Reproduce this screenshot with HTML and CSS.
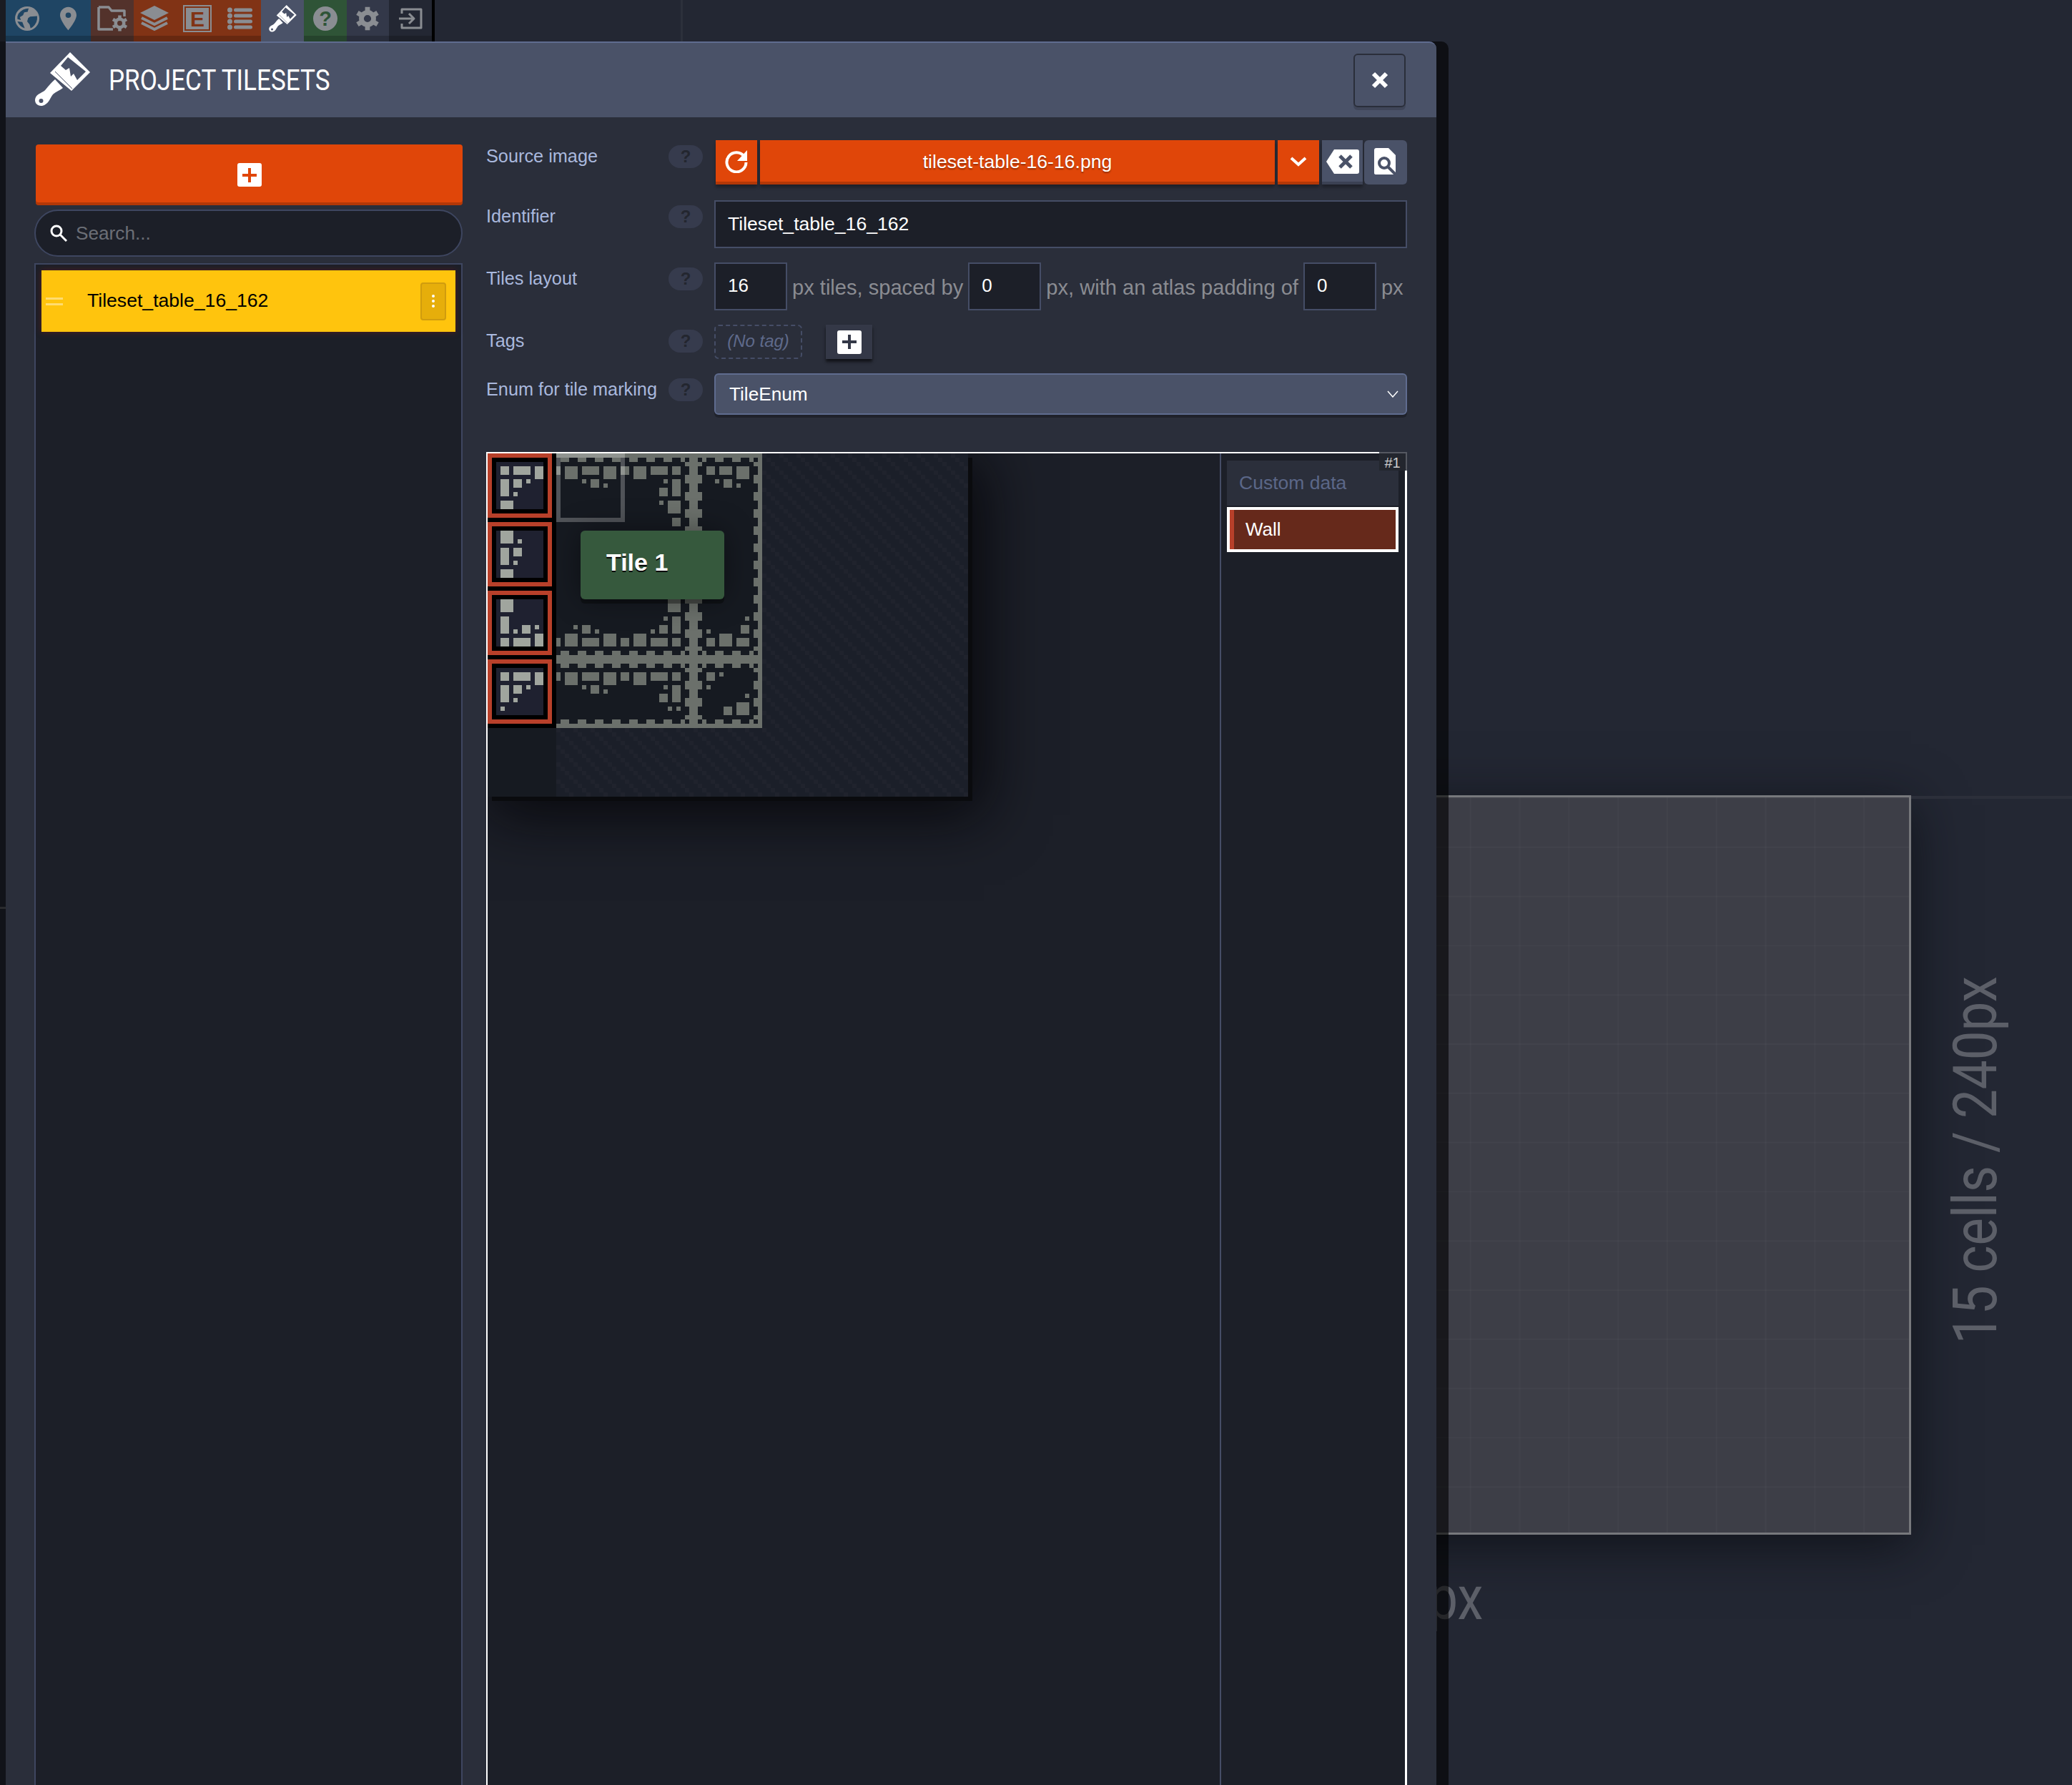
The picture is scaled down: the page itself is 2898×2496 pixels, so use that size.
FILE: index.html
```html
<!DOCTYPE html>
<html>
<head>
    <title>Project tilesets</title>
    <link rel="stylesheet" href="styles.css">
</head>
<body>
    <svg class="defs" width="0" height="0">
        <symbol id="brush" viewBox="9 8 77 78">
            <path fill="currentColor" fill-rule="evenodd" d="M30 37L58 8l28 28-26 26zM55 15L45 27l7 6 5-3 2 12 4-4 5 9 12-12z"/>
            <path fill="currentColor" fill-rule="evenodd" d="M37 46l11 12c-5 4-10 5-14 9-4 5-6 14-15 16-8 1-12-6-9-12 3-6 10-6 14-11 4-5 8-10 13-14zM17.500 73a3 3 0 100 6 3 3 0 000-6z"/>
            <path stroke="#4a5268" stroke-width="1" d="M37 35l24 24"/>
        </symbol>
        <symbol id="gear" viewBox="-20 -20 40 40">
            <g fill="none" stroke="currentColor" stroke-width="8">
                <circle r="10"/>
                <path d="M0-19v7M0 12v7M-16.500-9.500l6 3.500M10.500 6l6 3.500M-16.500 9.500l6-3.500M10.500-6l6-3.500"/>
            </g>
        </symbol>
    </svg>

    <div class="world">
        <div class="world-line"></div>
        <div class="world-tick"></div>
        <div class="level"></div>
        <div class="level-line"></div>
        <div class="level-width">15 cells / 240px</div>
        <div class="level-height">15 cells / 240px</div>
    </div>

    <div class="topbar">
        <div class="tool tool-wide tool-blue">
            <svg class="icon" width="34" height="34" viewBox="0 0 100 100">
                <circle cx="50" cy="50" r="50" fill="#8a8d92"/>
                <path fill="#1f4564" d="M14 30Q32 8 56 8L52 22 38 24 33 36 20 44 24 56 10 52Q8 40 14 30zM62 42L91 40Q94 68 72 85L64 90 60 74 50 62 54 48zM10 62L30 64 40 90Q20 84 10 62z"/>
            </svg>
            <svg class="icon" width="23" height="34" viewBox="0 0 24 34">
                <path fill="#8a8d92" fill-rule="evenodd" d="M12 0C5.400 0 0 5.400 0 12c0 8 12 22 12 22s12-14 12-22C24 5.400 18.600 0 12 0zm0 16a4 4 0 110-8 4 4 0 010 8z"/>
            </svg>
        </div>
        <div class="tool tool-brown">
            <svg class="icon" width="42" height="36" viewBox="0 0 42 36">
                <path fill="none" stroke="#8a8d92" stroke-width="3.500" stroke-linejoin="round" d="M2 2H16L20 7H38V15M22 33H2V2"/>
                <use href="#gear" x="20" y="13" width="23" height="23" color="#8a8d92"/>
            </svg>
        </div>
        <div class="tool tool-rust">
            <svg class="icon" width="40" height="36" viewBox="0 0 40 36">
                <path fill="#8a8d92" d="M20 0L40 10 20 20 0 10z"/>
                <path fill="none" stroke="#8a8d92" stroke-width="4" stroke-linejoin="round" d="M2 17L20 26 38 17M2 24L20 33 38 24"/>
            </svg>
        </div>
        <div class="tool tool-rust">
            <svg class="icon" width="40" height="38" viewBox="0 0 40 38">
                <rect x="1" y="1" width="38" height="36" fill="none" stroke="#8a8d92" stroke-width="2"/>
                <rect x="4" y="4" width="32" height="30" fill="#8a8d92"/>
                <text x="20" y="30" text-anchor="middle" class="icon-letter" fill="#813315">E</text>
            </svg>
        </div>
        <div class="tool tool-rust">
            <svg class="icon" width="36" height="32" viewBox="0 0 36 32">
                <g fill="#8a8d92">
                    <circle cx="3.500" cy="4" r="3.500"/><circle cx="3.500" cy="12" r="3.500"/>
                    <circle cx="3.500" cy="20" r="3.500"/><circle cx="3.500" cy="28" r="3.500"/>
                    <rect x="9" y="1.500" width="26" height="5" rx="2.500"/><rect x="9" y="9.500" width="26" height="5" rx="2.500"/>
                    <rect x="9" y="17.500" width="26" height="5" rx="2.500"/><rect x="9" y="25.500" width="26" height="5" rx="2.500"/>
                </g>
            </svg>
        </div>
        <div class="tool tool-active">
            <svg class="icon icon-brush-small"><use href="#brush"/></svg>
        </div>
        <div class="tool tool-green">
            <svg class="icon" width="34" height="34" viewBox="0 0 34 34">
                <circle cx="17" cy="17" r="17" fill="#8a8d92"/>
                <text x="17" y="27" text-anchor="middle" class="icon-help" fill="#2f5437">?</text>
            </svg>
        </div>
        <div class="tool tool-slate">
            <svg class="icon" width="34" height="34" color="#8a8d92"><use href="#gear"/></svg>
        </div>
        <div class="tool tool-dark">
            <svg class="icon" width="34" height="30" viewBox="0 0 34 30">
                <path fill="none" stroke="#8a8d92" stroke-width="3" stroke-linejoin="round" d="M5 8V2H32V28H5V22M1 15H22M15 8L22 15 15 22"/>
            </svg>
        </div>
    </div>

    <div class="modal">
        <div class="modal-head">
            <svg class="modal-icon"><use href="#brush"/></svg>
            <h1 class="modal-title">PROJECT TILESETS</h1>
            <div class="modal-close">
                <svg width="24" height="24" viewBox="0 0 24 24"><path stroke="#fff" stroke-width="6" d="M3 3L21 21M21 3L3 21"/></svg>
            </div>
        </div>
        <div class="modal-body">
            <div class="side">
                <div class="add-btn"><span class="plus-box plus-rust"></span></div>
                <div class="search">
                    <svg width="24" height="24" viewBox="0 0 24 24"><circle cx="9" cy="9" r="7" fill="none" stroke="#fff" stroke-width="3"/><path stroke="#fff" stroke-width="3" d="M14 14L23 23"/></svg>
                    <span>Search...</span>
                </div>
                <div class="list">
                    <div class="list-item">
                        <span class="grip"></span>
                        <span class="list-name">Tileset_table_16_162</span>
                        <span class="list-menu"><i></i><i></i><i></i></span>
                    </div>
                </div>
            </div>

            <div class="main">
                <div class="row row-source">
                    <label>Source image</label><span class="help">?</span>
                    <div class="field">
                        <div class="btn btn-orange btn-reload">
                            <svg width="32" height="32" viewBox="0 0 32 32"><path fill="none" stroke="#fff" stroke-width="4" d="M27 9A13.500 13.500 0 1 0 29.500 17"/><path fill="#fff" d="M31 0V15H17z"/></svg>
                        </div>
                        <div class="btn btn-orange btn-file">tileset-table-16-16.png</div>
                        <div class="btn btn-orange btn-drop">
                            <svg width="24" height="14" viewBox="0 0 24 14"><path fill="none" stroke="#fff" stroke-width="4" d="M2 2L12 11 22 2"/></svg>
                        </div>
                        <div class="btn btn-slate btn-remove">
                            <svg width="46" height="34" viewBox="0 0 46 34"><path fill="#fff" d="M11 0H43Q46 0 46 3V31Q46 34 43 34H11L0 17z"/><path stroke="#4a5268" stroke-width="5" d="M19 9L35 25M35 9L19 25"/></svg>
                        </div>
                        <div class="btn btn-slate btn-locate">
                            <svg width="32" height="38" viewBox="0 0 32 38"><path fill="#fff" d="M3 0H20L30 10V35Q30 37 27 37H3Q0 37 0 35V3Q0 0 3 0z"/><circle cx="14" cy="21" r="7" fill="none" stroke="#4a5268" stroke-width="4"/><path stroke="#4a5268" stroke-width="4" d="M19 26L30 37"/></svg>
                        </div>
                    </div>
                </div>
                <div class="row">
                    <label>Identifier</label><span class="help">?</span>
                    <div class="field"><div class="input input-full">Tileset_table_16_162</div></div>
                </div>
                <div class="row">
                    <label>Tiles layout</label><span class="help">?</span>
                    <div class="field field-layout">
                        <div class="input input-num">16</div>
                        <span>px tiles, spaced by</span>
                        <div class="input input-num">0</div>
                        <span>px, with an atlas padding of</span>
                        <div class="input input-num">0</div>
                        <span>px</span>
                    </div>
                </div>
                <div class="row row-tags">
                    <label>Tags</label><span class="help">?</span>
                    <div class="field field-tags">
                        <div class="no-tag">(No tag)</div>
                        <div class="add-tag"><span class="plus-box plus-dark"></span></div>
                    </div>
                </div>
                <div class="row row-enum">
                    <label>Enum for tile marking</label><span class="help">?</span>
                    <div class="field">
                        <div class="select">
                            <span>TileEnum</span>
                            <svg width="16" height="10" viewBox="0 0 16 10"><path fill="none" stroke="#fff" stroke-width="1.500" d="M1 1L8 9 15 1"/></svg>
                        </div>
                    </div>
                </div>

                <div class="tile-panel">
                    <div class="tile-canvas">
                        <div class="atlas">
                            <svg class="atlas-art" width="672" height="480" viewBox="0 0 112 80" shape-rendering="crispEdges">
                                <defs>
                                    <pattern id="check" width="4" height="4" patternUnits="userSpaceOnUse">
                                        <rect width="4" height="4" fill="#1b1f29"/>
                                        <path fill="#20232d" d="M0 0h1v1H0zM1 1h1v1H1zM2 2h1v1H2zM3 3h1v1H3z"/>
                                    </pattern>
                                    <pattern id="crenel-x" width="4" height="1" patternUnits="userSpaceOnUse">
                                        <rect x="1" width="2" height="1" fill="#6b706b"/>
                                    </pattern>
                                    <pattern id="crenel-y" width="1" height="4" patternUnits="userSpaceOnUse">
                                        <rect y="1" width="1" height="2" fill="#6b706b"/>
                                    </pattern>
                                </defs>
                                <rect width="112" height="80" fill="url(#check)"/>
                                <rect width="16" height="64" fill="#000"/>
                                <rect y="64" width="16" height="16" fill="#161a21"/>

                                <g transform="translate(16 0)">
                                    <rect width="48" height="64" fill="#161a21"/>
                                    <!-- walls -->
                                    <path fill="#6b706b" d="M0 0h48v1H0zM47 0h1v64h-1zM31 0h2v64h-2zM0 47h48v2H0zM0 63h48v1H0z"/>
                                    <g fill="url(#crenel-x)">
                                        <rect y="1" width="30" height="1"/><rect x="34" y="1" width="12" height="1"/>
                                        <rect y="46" width="30" height="1"/><rect x="34" y="46" width="12" height="1"/>
                                        <rect y="49" width="30" height="1"/><rect x="34" y="49" width="12" height="1"/>
                                        <rect y="62" width="30" height="1"/><rect x="34" y="62" width="12" height="1"/>
                                    </g>
                                    <g fill="url(#crenel-y)">
                                        <rect x="30" y="2" width="1" height="44"/><rect x="33" y="2" width="1" height="44"/><rect x="46" y="2" width="1" height="44"/>
                                        <rect x="30" y="50" width="1" height="12"/><rect x="33" y="50" width="1" height="12"/><rect x="46" y="50" width="1" height="12"/>
                                    </g>
                                    <!-- blocks -->
                                    <path fill="#6b706b" d="M0 3h1v2H0zM2 3h3v3H2zM6 3h4v2H6zM11 3h3v3h-3zM15 3h2v2h-2zM18 3h3v3h-3zM22 3h4v2h-4zM27 3h2v2h-2zM6 6h1v1H6zM8 6h2v2H8zM11 7h1v1h-1zM25 6h1v1h-1zM27 6h2v4h-2zM24 8h2v2h-2zM24 11h1v1h-1zM26 11h3v3h-3zM27 15h2v2h-2zM35 3h2v2h-2zM38 3h3v2h-3zM42 3h3v3h-3zM37 6h1v1h-1zM39 6h2v2h-2zM42 7h1v1h-1z"/>
                                    <path fill="#6b706b" d="M26 34h3v3h-3zM25 38h1v1h-1zM27 38h2v4h-2zM24 40h2v2h-2zM22 41h1v1h-1zM27 43h2v2h-2zM22 43h4v2h-4zM18 42h3v3h-3zM15 43h2v2h-2zM11 42h3v3h-3zM6 43h4v2H6zM2 42h3v3H2zM0 43h1v2H0zM4 40h1v1H4zM6 40h2v2H6zM9 41h1v1H9zM44 38h1v1h-1zM43 40h2v2h-2zM35 41h1v1h-1zM35 43h2v2h-2zM38 42h3v3h-3zM42 43h3v2h-3z"/>
                                    <path fill="#6b706b" d="M0 51h1v2H0zM2 51h3v3H2zM6 51h4v2H6zM11 51h3v3h-3zM15 51h2v2h-2zM18 51h3v3h-3zM22 51h4v2h-4zM27 51h2v2h-2zM6 54h1v1H6zM8 54h2v2H8zM11 55h1v1h-1zM25 54h1v1h-1zM27 54h2v4h-2zM24 56h2v2h-2zM26 59h1v1h-1zM28 59h1v1h-1zM35 51h2v2h-2zM38 51h1v1h-1zM35 54h1v1h-1zM44 56h1v1h-1zM42 58h3v3h-3zM39 59h2v2h-2z"/>
                                    <!-- hovered tile -->
                                    <path fill="#fff" fill-opacity="0.25" fill-rule="evenodd" d="M0 0h16v16H0zM1 1v14h14V1z"/>
                                </g>

                                <!-- marked tiles -->
                                <g fill="none" stroke="#b8402a">
                                    <rect x="0.500" y="0.500" width="14" height="14"/><rect x="0.500" y="16.500" width="14" height="14"/>
                                    <rect x="0.500" y="32.500" width="14" height="14"/><rect x="0.500" y="48.500" width="14" height="14"/>
                                </g>
                                <g fill="#1f2130">
                                    <rect x="2" y="2" width="11" height="11"/><rect x="2" y="18" width="11" height="11"/>
                                    <rect x="2" y="34" width="11" height="11"/><rect x="2" y="50" width="11" height="11"/>
                                </g>
                                <path fill="#a0a59e" transform="translate(2 2)" d="M1 1h2v2H1zM4 1h4v2H4zM9 1h2v3H9zM1 4h2v4H1zM4 4h2v2H4zM7 4h1v1H7zM4 7h1v1H4zM1 9h3v2H1z"/>
                                <path fill="#a0a59e" transform="translate(2 18)" d="M1 0h3v3H1zM5 2h1v1H5zM1 4h2v4H1zM4 4h2v2H4zM4 7h1v1H4zM1 9h3v2H1z"/>
                                <path fill="#a0a59e" transform="translate(2 34)" d="M1 0h3v3H1zM1 4h2v4H1zM4 7h1v1H4zM6 6h2v2H6zM9 6h1v1H9zM1 9h2v2H1zM4 9h4v2H4zM9 8h2v3H9z"/>
                                <path fill="#a0a59e" transform="translate(2 50)" d="M1 1h2v2H1zM4 1h4v2H4zM9 1h2v3H9zM1 4h2v4H1zM4 4h2v2H4zM7 4h1v1H7zM4 7h1v1H4zM1 9h1v1H1z"/>
                            </svg>
                            <div class="tile-tag">Tile 1</div>
                        </div>
                    </div>
                    <div class="tile-side">
                        <span class="tile-badge">#1</span>
                        <div class="tile-side-title">Custom data</div>
                        <div class="tile-enum">Wall</div>
                    </div>
                </div>
            </div>
        </div>
    </div>
</body>
</html>
```

FILE: styles.css
```css
* {
    box-sizing: border-box;
}
html, body {
    margin: 0;
    height: 2496px;
    overflow: hidden;
}
body {
    display: flex;
    flex-direction: column;
    position: relative;
    background: #232733;
    font-family: "Liberation Sans", Arial, sans-serif;
    color: #fff;
}
.defs {
    position: absolute;
}

/* the level behind the modal */
.world-line {
    position: absolute;
    left: 952px;
    top: 0;
    width: 3px;
    height: 58px;
    background: #2c303b;
}
.world-tick {
    position: absolute;
    left: 0;
    top: 1268px;
    width: 8px;
    height: 3px;
    background: #55575c;
}
.level {
    position: absolute;
    left: 1640px;
    top: 1112px;
    width: 1033px;
    height: 1034px;
    border: 3px solid #77787c;
    background-color: #3d3e47;
    background-image:
        linear-gradient(to right, rgba(255,255,255,0.02) 2px, transparent 2px),
        linear-gradient(to bottom, rgba(255,255,255,0.02) 2px, transparent 2px);
    background-size: 68.8px 68.8px;
    box-shadow: 0 14px 70px rgba(10,12,18,0.75);
}
.level-line {
    position: absolute;
    left: 2673px;
    top: 1113px;
    right: 0;
    height: 4px;
    background: #2c2f3a;
}
.level-width, .level-height {
    position: absolute;
    font-family: Roboto, "Liberation Sans", sans-serif;
    font-size: 86px;
    line-height: 1;
    white-space: nowrap;
    color: #5c5f68;
}
.level-width {
    right: 824px;
    top: 2192px;
    transform: scaleX(0.84);
    transform-origin: right;
}
.level-height {
    left: 2720px;
    top: 1318px;
    writing-mode: vertical-rl;
    transform: rotate(180deg) scaleY(0.845);
    transform-origin: center;
}

/* top toolbar */
.topbar {
    display: flex;
    position: relative;
    height: 58px;
    width: 608px;
    border-left: 8px solid #1a1c23;
    border-right: 4px solid #000;
}
.tool {
    display: flex;
    align-items: center;
    justify-content: center;
    width: 59.600px;
    height: 58px;
    padding-bottom: 6px;
    box-shadow: inset 0 -8px 0 rgba(0,0,0,0.2);
}
.tool-wide {
    width: 119px;
    justify-content: space-between;
    padding: 0 20px 6px 13px;
}
.tool-blue { background: #1f4564; }
.tool-brown { background: #53322b; }
.tool-rust { background: #813315; }
.tool-green { background: #2f5437; }
.tool-slate { background: #333849; }
.tool-dark { background: #232733; }
.tool-active {
    background: #4a5268;
    box-shadow: none;
    color: #fff;
}
.icon-brush-small {
    width: 39px;
    height: 39px;
}
.icon-letter {
    font: bold 30px "Liberation Sans", sans-serif;
}
.icon-help {
    font: bold 29px "Liberation Sans", sans-serif;
}

/* modal */
.modal {
    display: flex;
    flex-direction: column;
    flex: 1;
    position: relative;
    width: 2001px;
    margin-left: 8px;
    min-height: 0;
    border-top-right-radius: 10px;
    background: #2a2e3a;
    box-shadow: 17px 0 0 rgba(0,0,0,0.6), -8px 0 0 rgba(0,0,0,0.5);
}
.modal-head {
    display: flex;
    align-items: center;
    height: 106px;
    padding: 0 43px 0 41px;
    border-top: 2px solid #5f6c8f;
    border-top-right-radius: 10px;
    background: #4a5268;
}
.modal-icon {
    width: 77px;
    height: 78px;
    color: #fff;
    margin-right: 26px;
}
.modal-title {
    flex: 1;
    margin: 0;
    font-family: Roboto, "Liberation Sans", sans-serif;
    font-weight: normal;
    font-size: 41px;
    transform: scaleX(0.855);
    transform-origin: left;
}
.modal-close {
    display: flex;
    align-items: center;
    justify-content: center;
    width: 73px;
    height: 75px;
    border: 2px solid #2a2e3a;
    border-radius: 6px;
    box-shadow: 0 4px 0 rgba(0,0,0,0.15);
}
.modal-body {
    display: flex;
    flex: 1;
    min-height: 0;
    gap: 33px;
    padding: 32px 41px 0 40px;
}

/* left column */
.side {
    display: flex;
    flex-direction: column;
    width: 599px;
    padding-top: 6px;
}
.add-btn {
    display: flex;
    align-items: center;
    justify-content: center;
    width: 597px;
    height: 85px;
    margin-left: 2px;
    border-radius: 4px;
    background: #e04609;
    box-shadow: inset 0 -4px 0 rgba(0,0,0,0.2);
}
.plus-box {
    display: block;
    width: 34px;
    height: 33px;
    border-radius: 3px;
    background-color: #fff;
    background-repeat: no-repeat;
    background-position: center;
    background-size: 20px 4px, 4px 20px;
}
.plus-rust {
    background-image: linear-gradient(#e04609, #e04609), linear-gradient(#e04609, #e04609);
}
.plus-dark {
    background-image: linear-gradient(#343847, #343847), linear-gradient(#343847, #343847);
}
.search {
    display: flex;
    align-items: center;
    gap: 12px;
    height: 66px;
    margin-top: 6px;
    padding-left: 20px;
    border: 2px solid #3e4660;
    border-radius: 33px;
    background: #1c1f28;
    font-size: 26.200px;
    color: #6b6e76;
}
.list {
    flex: 1;
    margin-top: 9px;
    padding: 8px 8px 0;
    border: 2px solid #3e4660;
    border-bottom: none;
    background: #1c1f28;
}
.list-item {
    display: flex;
    align-items: center;
    height: 86px;
    padding: 0 13px 0 6px;
    background: #ffc40d;
    box-shadow: 0 0 8px rgba(130,30,20,0.55);
    color: #000;
    font-size: 26.600px;
}
.grip {
    width: 24px;
    height: 11px;
    margin-right: 34px;
    border-top: 3px solid #ffdc70;
    border-bottom: 3px solid #ffdc70;
}
.list-name {
    flex: 1;
    padding-bottom: 2px;
}
.list-menu {
    display: flex;
    flex-direction: column;
    align-items: center;
    justify-content: center;
    gap: 3px;
    width: 36px;
    height: 53px;
    border: 2px solid #d09c0e;
    border-radius: 4px;
    background: #e6ae0b;
}
.list-menu i {
    width: 4px;
    height: 4px;
    border-radius: 50%;
    background: #fff;
}

/* right column */
.main {
    display: flex;
    flex-direction: column;
    width: 1288px;
    min-height: 0;
}
.row {
    display: flex;
    margin-bottom: 20px;
}
.row label {
    width: 255px;
    padding-top: 7px;
    font-size: 25.300px;
    line-height: 30px;
    color: #a9b8dd;
}
.help {
    width: 48px;
    height: 32px;
    margin: 7px 16px 0 0;
    border-radius: 16px;
    background: #363b4d;
    color: #23262f;
    font-size: 24px;
    font-weight: bold;
    line-height: 32px;
    text-align: center;
}
.field {
    display: flex;
    flex: 1;
    gap: 4px;
}
.row-source {
    height: 64px;
}
.btn {
    display: flex;
    align-items: center;
    justify-content: center;
    height: 62px;
    padding-bottom: 2px;
    box-shadow: 0 4px 4px rgba(0,0,0,0.3), inset 0 -4px 0 rgba(0,0,0,0.2);
}
.btn-orange { background: #e04609; }
.btn-slate { background: #4a5268; }
.btn-reload {
    width: 58px;
    margin-left: 2px;
}
.btn-file {
    flex: 1;
    font-size: 26.600px;
    text-shadow: 0 2px 2px rgba(0,0,0,0.35);
}
.btn-drop {
    width: 58px;
}
.btn-remove {
    width: 57px;
}
.btn-locate {
    width: 60px;
    margin-left: -2px;
    border-radius: 6px;
    box-shadow: none;
}
.input {
    display: flex;
    align-items: center;
    height: 67px;
    padding-left: 17px;
    border: 2px solid #454d66;
    background: #1c1f28;
    font-size: 26.600px;
}
.input-full {
    flex: 1;
}
.input-num {
    width: 102px;
    flex: none;
    padding-bottom: 2px;
}
.field-layout {
    height: 67px;
    gap: 7px;
    font-size: 29.100px;
    line-height: 71px;
    color: #8a8c92;
}
.field-layout .input {
    color: #fff;
    font-size: 26px;
}
.field-tags {
    gap: 33px;
}
.no-tag {
    width: 123px;
    height: 48px;
    border: 2px dashed #454d66;
    border-radius: 6px;
    font-size: 24px;
    font-style: italic;
    line-height: 42px;
    text-align: center;
    color: #5f6a8b;
}
.add-tag {
    display: flex;
    align-items: center;
    justify-content: center;
    width: 65px;
    height: 48px;
    background: #343847;
    box-shadow: 0 4px 4px rgba(0,0,0,0.6);
}
.row-enum {
    margin-bottom: 52px;
}
.select {
    display: flex;
    flex: 1;
    align-items: center;
    justify-content: space-between;
    height: 58px;
    padding: 0 10px 0 19px;
    border: 2px solid #5f6c8f;
    border-radius: 6px;
    background: #4a5268;
    box-shadow: 0 4px 0 rgba(0,0,0,0.25);
    font-size: 26.200px;
}

/* tile editor */
.tile-panel {
    display: flex;
    flex: 1;
    position: relative;
    min-height: 0;
    border: solid #fff;
    border-width: 2px 3px 0 2px;
    background: #1c1f28;
}
.tile-canvas {
    flex: 1;
    overflow: hidden;
}
.atlas {
    position: relative;
    width: 672px;
    height: 480px;
    box-shadow: 6px 6px 0 #0a0b0e, 12px 16px 80px 10px rgba(5,5,8,0.85);
}
.atlas-art {
    display: block;
}
.tile-tag {
    position: absolute;
    left: 130px;
    top: 108px;
    width: 201px;
    height: 96px;
    padding: 22px 0 0 36px;
    border-radius: 6px;
    background: #36593d;
    box-shadow: 0 6px 0 rgba(0,0,0,0.35), 0 0 40px rgba(0,0,0,0.4);
    font-size: 34px;
    font-weight: bold;
    line-height: 44px;
    text-shadow: 0 2px 0 #000;
}
.tile-side {
    position: relative;
    width: 259px;
    padding: 10px 9px 0 8px;
    border-left: 2px solid #454d66;
}
.tile-badge {
    position: absolute;
    top: -2px;
    right: -3px;
    width: 39px;
    height: 26px;
    border: solid #555861;
    border-width: 2px 2px 0 0;
    background: #23262e;
    color: #ccc;
    font-size: 20px;
    line-height: 26px;
    text-align: center;
}
.tile-side-title {
    height: 63px;
    padding-left: 17px;
    background: #2b2f3b;
    color: #5b6788;
    font-size: 26.500px;
    line-height: 62px;
}
.tile-enum {
    height: 63px;
    margin-top: 2px;
    padding-left: 22px;
    border: 4px solid #fff;
    background: linear-gradient(to right, #b8402a 6px, #66291b 6px);
    font-size: 26px;
    line-height: 54px;
}
```
